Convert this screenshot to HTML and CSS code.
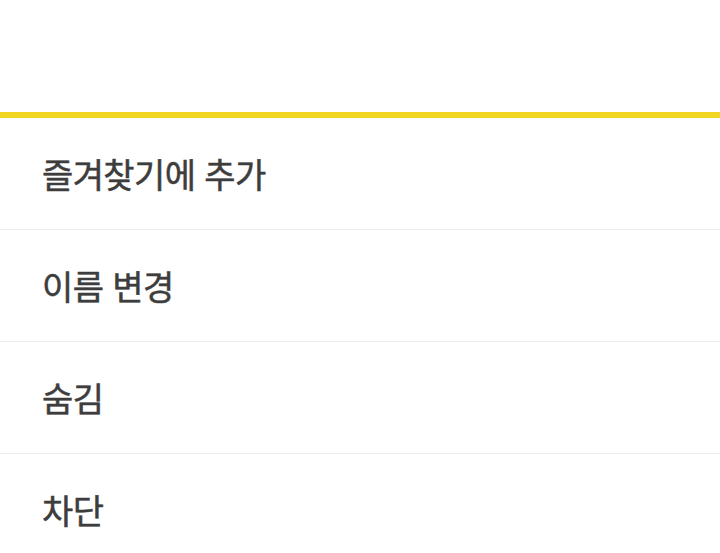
FILE: index.html
```html
<!DOCTYPE html>
<html lang="ko">

<head>
    <meta charset="utf-8">
    <link rel="stylesheet" href="styles.css">
</head>

<body>
    <div class="header"></div>
    <ul class="menu">
        <li>즐겨찾기에 추가</li>
        <li>이름 변경</li>
        <li>숨김</li>
        <li>차단</li>
    </ul>
</body>

</html>
```

FILE: styles.css
```css
body {
    margin: 0;
    background: #fff;
    font-family: "Noto Sans CJK KR", "Noto Sans", sans-serif;
}

.header {
    height: 112px;
    border-bottom: 6px solid #f2d622;
}

.menu {
    list-style-type: none;
    margin: 0;
    padding: 0;
}

.menu li {
    height: 111px;
    border-bottom: 1px solid #ececec;
    padding-left: 42px;
    display: flex;
    align-items: center;
    font-size: 34px;
    letter-spacing: -0.6px;
    color: #3d3d3d;
    -webkit-text-stroke: 0.5px #3d3d3d;
}
```
